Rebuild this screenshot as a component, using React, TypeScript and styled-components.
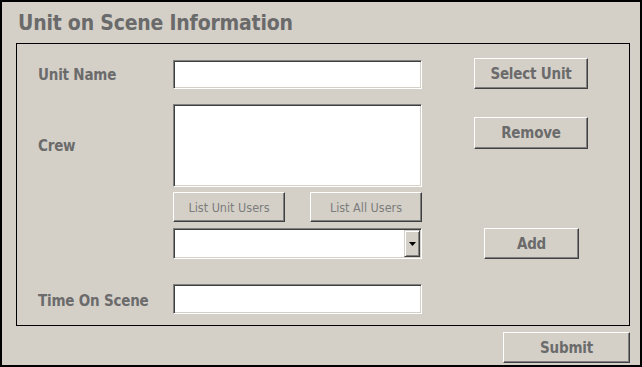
import React from 'react';
import styled, { createGlobalStyle } from 'styled-components';

const Color = {
    Face: '#d4d0c8',
    Text: '#6b6b6b',
    Light: '#7c7c7c',
    Dark: '#404040',
    Shadow: '#808080',
    White: '#ffffff',
};

const Global = createGlobalStyle`
    html, body {
        margin: 0;
        padding: 0;
        background: ${Color.Face};
    }
    * { box-sizing: border-box; }
`;

const Window = styled.div`
    width: 642px;
    height: 367px;
    border: 2px solid #000;
    background: ${Color.Face};
    font-family: "DejaVu Sans Condensed", "DejaVu Sans", sans-serif;
    color: ${Color.Text};
    display: flex;
    flex-direction: column;
`;

const Title = styled.h1`
    margin: 0;
    padding: 8px 0 0 16px;
    height: 41px;
    font-size: 21px;
    font-weight: 700;
    line-height: 26px;
    letter-spacing: -0.2px;
    color: #6a6a6a;
`;

const Box = styled.div`
    margin-left: 14px;
    width: 614px;
    height: 283px;
    border: 1px solid #000;
    padding: 14px 0 0 21px;
    display: flex;
    flex-direction: column;
`;

interface RowProps {
    gap?: number
    height: number
}

const Row = styled.div<RowProps>`
    display: flex;
    height: ${props => props.height}px;
    margin-top: ${props => props.gap || 0}px;
`;

const Label = styled.div<{ top?: number }>`
    width: 135px;
    flex-shrink: 0;
    display: flex;
    align-items: center;
    padding-top: ${props => props.top || 0}px;
    font-size: 15px;
    font-weight: 700;
    letter-spacing: -0.2px;
`;

const FieldCell = styled.div<{ top?: number }>`
    width: 249px;
    flex-shrink: 0;
    display: flex;
    align-items: flex-start;
    justify-content: space-between;
    padding-top: ${props => props.top || 0}px;
`;

const ActionCell = styled.div<{ left: number, top?: number }>`
    padding-left: ${props => props.left}px;
    padding-top: ${props => props.top || 0}px;
`;

const Sunken = styled.div<{ h: number }>`
    width: 249px;
    height: ${props => props.h}px;
    background: ${Color.White};
    border-style: solid;
    border-width: 1px;
    border-color: ${Color.Shadow} ${Color.White} ${Color.White} ${Color.Shadow};
    box-shadow: inset 1px 1px 0 ${Color.Dark}, inset -1px -1px 0 ${Color.Face};
    position: relative;
`;

interface ButtonProps {
    w: number
    h: number
    light?: boolean
}

const Button = styled.button<ButtonProps>`
    width: ${props => props.w}px;
    height: ${props => props.h}px;
    padding: 0;
    background: ${Color.Face};
    border-style: solid;
    border-width: 1px;
    border-color: ${Color.White} ${Color.Dark} ${Color.Dark} ${Color.White};
    box-shadow: inset -1px -1px 0 ${Color.Shadow};
    font-family: inherit;
    font-size: ${props => (props.light ? 12.5 : 15)}px;
    font-weight: ${props => (props.light ? 400 : 700)};
    color: ${props => (props.light ? Color.Light : Color.Text)};
    letter-spacing: ${props => (props.light ? 0 : -0.2)}px;
`;

const DropButton = styled.div`
    position: absolute;
    top: 1px;
    right: 1px;
    width: 16px;
    bottom: 1px;
    background: ${Color.Face};
    border-style: solid;
    border-width: 1px;
    border-color: ${Color.Face} ${Color.Dark} ${Color.Dark} ${Color.Face};
    box-shadow: inset 1px 1px 0 ${Color.White}, inset -1px -1px 0 ${Color.Shadow};
    display: flex;
    align-items: center;
    justify-content: center;
`;

const Footer = styled.div`
    display: flex;
    justify-content: flex-end;
    padding: 6px 10px 0 0;
`;

export default function App() {
    return (
        <>
            <Global />
            <Window>
                <Title>Unit on Scene Information</Title>
                <Box>
                    <Row height={31}>
                        <Label top={3}>Unit Name</Label>
                        <FieldCell top={2}>
                            <Sunken h={29} />
                        </FieldCell>
                        <ActionCell left={52}>
                            <Button w={114} h={31}>Select Unit</Button>
                        </ActionCell>
                    </Row>
                    <Row height={83} gap={15}>
                        <Label>Crew</Label>
                        <FieldCell>
                            <Sunken h={83} />
                        </FieldCell>
                        <ActionCell left={52} top={13}>
                            <Button w={114} h={32}>Remove</Button>
                        </ActionCell>
                    </Row>
                    <Row height={30} gap={5}>
                        <Label />
                        <FieldCell>
                            <Button w={112} h={30} light>List Unit Users</Button>
                            <Button w={112} h={30} light>List All Users</Button>
                        </FieldCell>
                    </Row>
                    <Row height={31} gap={6}>
                        <Label />
                        <FieldCell>
                            <Sunken h={31}>
                                <DropButton>
                                    <svg width="7" height="4" viewBox="0 0 7 4">
                                        <path d="M0 0h7L3.5 4z" fill="#000" />
                                    </svg>
                                </DropButton>
                            </Sunken>
                        </FieldCell>
                        <ActionCell left={62}>
                            <Button w={95} h={31}>Add</Button>
                        </ActionCell>
                    </Row>
                    <Row height={30} gap={25}>
                        <Label top={3}>Time On Scene</Label>
                        <FieldCell>
                            <Sunken h={30} />
                        </FieldCell>
                    </Row>
                </Box>
                <Footer>
                    <Button w={127} h={31}>Submit</Button>
                </Footer>
            </Window>
        </>
    );
}
